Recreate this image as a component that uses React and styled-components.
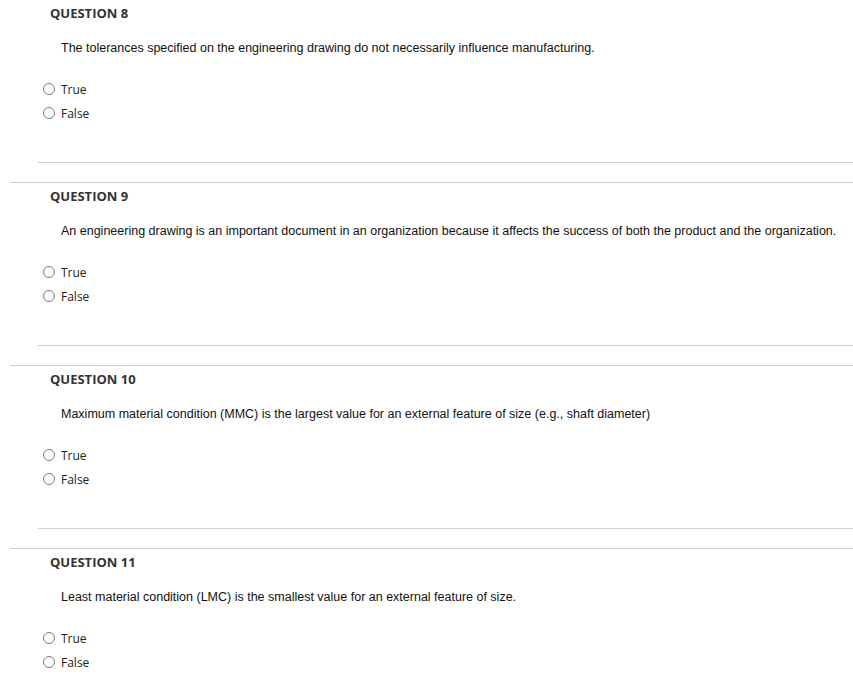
import React from 'react';
import styled, { createGlobalStyle } from 'styled-components';

const GlobalStyle = createGlobalStyle`
  html, body {
    margin: 0;
    padding: 0;
    background: #fff;
  }
`;

const Page = styled.div`
  padding-left: 10px;
  width: 843px;
`;

const Question = styled.section`
  border-top: 1px solid ${(p) => (p.first ? 'transparent' : '#cfcfcf')};
  margin-top: ${(p) => (p.first ? '-1px' : '0')};
  padding-top: 4px;
  padding-bottom: 19px;
`;

const Title = styled.h3`
  margin: 0;
  padding-left: 40px;
  font-family: 'Open Sans', sans-serif;
  font-weight: 700;
  font-size: 13px;
  line-height: 18px;
  color: #333;
`;

const Prompt = styled.p`
  margin: 18px 0 0;
  padding-left: 51px;
  font-family: 'Liberation Sans', Arial, sans-serif;
  font-size: 12.5px;
  line-height: 16px;
  color: #111;
`;

const Options = styled.div`
  margin-top: 21px;
  padding-left: 33px;
  display: flex;
  flex-direction: column;
`;

const Option = styled.label`
  display: flex;
  align-items: center;
  height: 24px;
  gap: 6px;
  font-family: 'Open Sans', sans-serif;
  font-size: 12px;
  color: #222;
`;

const Radio = styled.input`
  appearance: none;
  margin: 0;
  width: 12px;
  height: 12px;
  border: 1px solid #7a7a7a;
  border-radius: 50%;
  background: #fff;
  box-sizing: border-box;
`;

const Divider = styled.hr`
  margin: 37px 0 0 28px;
  border: none;
  border-top: 1px solid #cfcfcf;
  height: 0;
`;

const questions = [
  {
    n: 8,
    text: 'The tolerances specified on the engineering drawing do not necessarily influence manufacturing.',
  },
  {
    n: 9,
    text: 'An engineering drawing is an important document in an organization because it affects the success of both the product and the organization.',
  },
  {
    n: 10,
    text: 'Maximum material condition (MMC) is the largest value for an external feature of size (e.g., shaft diameter)',
  },
  {
    n: 11,
    text: 'Least material condition (LMC) is the smallest value for an external feature of size.',
  },
];

export default function App() {
  return (
    <Page>
      <GlobalStyle />
      {questions.map((q, i) => (
        <Question key={q.n} first={i === 0}>
          <Title>QUESTION {q.n}</Title>
          <Prompt>{q.text}</Prompt>
          <Options>
            <Option>
              <Radio type="radio" name={`q${q.n}`} />
              True
            </Option>
            <Option>
              <Radio type="radio" name={`q${q.n}`} />
              False
            </Option>
          </Options>
          <Divider />
        </Question>
      ))}
    </Page>
  );
}
